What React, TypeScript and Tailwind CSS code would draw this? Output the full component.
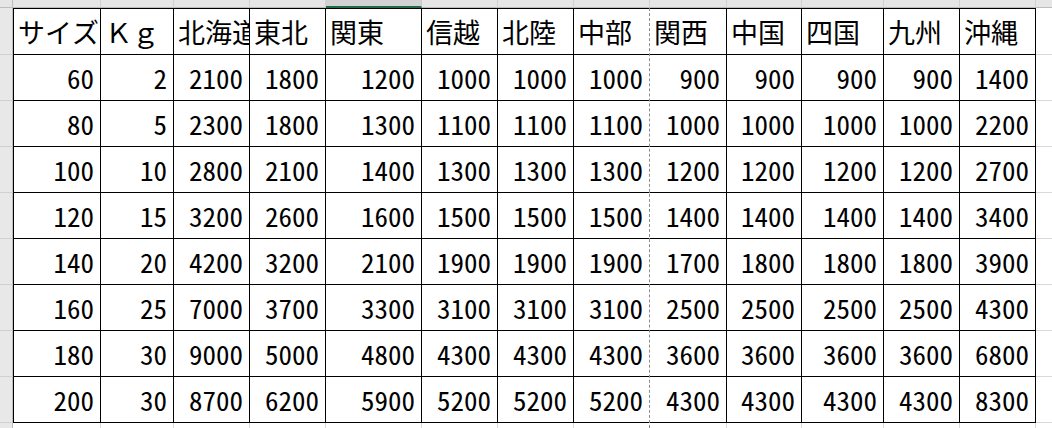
import React from "react";

const headers = ["サイズ", "Ｋｇ", "北海道", "東北", "関東", "信越", "北陸", "中部", "関西", "中国", "四国", "九州", "沖縄"];

const rows: number[][] = [
  [60, 2, 2100, 1800, 1200, 1000, 1000, 1000, 900, 900, 900, 900, 1400],
  [80, 5, 2300, 1800, 1300, 1100, 1100, 1100, 1000, 1000, 1000, 1000, 2200],
  [100, 10, 2800, 2100, 1400, 1300, 1300, 1300, 1200, 1200, 1200, 1200, 2700],
  [120, 15, 3200, 2600, 1600, 1500, 1500, 1500, 1400, 1400, 1400, 1400, 3400],
  [140, 20, 4200, 3200, 2100, 1900, 1900, 1900, 1700, 1800, 1800, 1800, 3900],
  [160, 25, 7000, 3700, 3300, 3100, 3100, 3100, 2500, 2500, 2500, 2500, 4300],
  [180, 30, 9000, 5000, 4800, 4300, 4300, 4300, 3600, 3600, 3600, 3600, 6800],
  [200, 30, 8700, 6200, 5900, 5200, 5200, 5200, 4300, 4300, 4300, 4300, 8300],
];

const NCOLS = 13;

function cellBorder(r: number, c: number) {
  // r: 0 = header row, 1..8 data; c: 0..12
  let cls = "border-b border-r border-black";
  if (c === 0) cls += " border-l";
  if (r === 0) cls += " border-t";
  if (c === 7) cls += " border-r-white";
  return cls;
}

export default function App() {
  const cells: React.ReactNode[] = [];

  // top strip (column headers)
  cells.push(<div key="corner" className="bg-[#e6e6e6] border-r border-b border-[#bdbdbd]" />);
  for (let c = 0; c < NCOLS; c++) {
    const sel = c === 4;
    cells.push(
      <div
        key={`ch${c}`}
        className={
          sel
            ? "bg-[#d2d2d2] border-r border-r-[#c8c8c8] border-b-2 border-b-[#1f6b43]"
            : "bg-[#e6e6e6] border-r border-r-[#d0d0d0] border-b border-b-[#bdbdbd]"
        }
      />
    );
  }
  cells.push(<div key="chf" className="bg-[#e6e6e6] border-b border-b-[#bdbdbd]" />);

  // table rows
  for (let r = 0; r < 9; r++) {
    cells.push(<div key={`rh${r}`} className="bg-[#e8e8e8] border-r border-r-[#bdbdbd] border-b border-b-[#d0d0d0]" />);
    for (let c = 0; c < NCOLS; c++) {
      const b = cellBorder(r, c);
      if (r === 0) {
        cells.push(
          <div key={`h${c}`} className={`${b} flex items-center pl-[4px] overflow-hidden whitespace-nowrap bg-white`}>
            {headers[c]}
          </div>
        );
      } else {
        cells.push(
          <div key={`d${r}-${c}`} className={`${b} flex items-center justify-end pr-[6px] overflow-hidden whitespace-nowrap bg-white`}>
            {rows[r - 1][c]}
          </div>
        );
      }
    }
    cells.push(<div key={`rf${r}`} className="border-b border-[#d9d9d9] bg-white" />);
  }

  // bottom filler row
  cells.push(<div key="bh" className="bg-[#e8e8e8] border-r border-r-[#bdbdbd]" />);
  for (let c = 0; c < NCOLS; c++) {
    cells.push(<div key={`bf${c}`} className={c === 7 ? "bg-white" : "border-r border-[#d9d9d9] bg-white"} />);
  }
  cells.push(<div key="bff" className="bg-white" />);

  return (
    <div className="relative w-[1052px] h-[428px] overflow-hidden bg-white text-black text-[27px] leading-none font-['Noto_Sans_Mono_CJK_JP','Noto_Sans_CJK_JP',sans-serif]">
      <div className="grid h-full grid-cols-[13px_88px_73px_76px_76px_96px_76px_76px_76px_77px_75px_82px_76px_76px_1fr] grid-rows-[8px_47px_repeat(8,46px)_1fr]">
        {cells}
      </div>
      <div className="absolute left-[649px] top-[8px] bottom-0 w-0 border-l border-dashed border-[#8c8c8c]" />
    </div>
  );
}
